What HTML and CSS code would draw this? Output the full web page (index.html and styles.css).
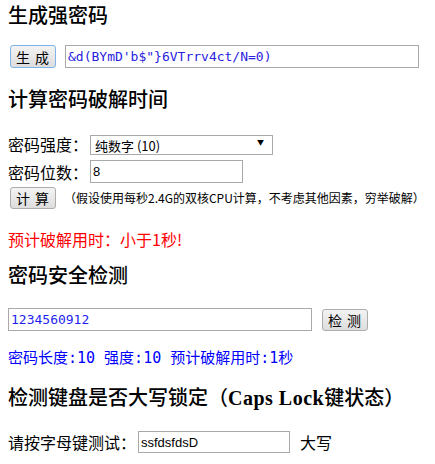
FILE: index.html
```html
<!DOCTYPE html>
<html lang="zh-CN">
<head>
    <meta charset="UTF-8">
    <title>密码工具</title>
    <link rel="stylesheet" href="styles.css">
</head>
<body>
    <div class="page">
        <h3 class="title">生成强密码</h3>
        <div class="row gen-row">
            <button class="btn btn-focus">生 成</button>
            <input class="txt pwd-out" type="text" value="&amp;d(BYmD'b$&quot;}6VTrrv4ct/N=0)">
        </div>

        <h3 class="title crack-title">计算密码破解时间</h3>
        <div class="crack-form">
            <div class="row">
                <span class="label">密码强度：</span>
                <div class="select-wrap">
                    <select class="select">
                        <option>纯数字 (10)</option>
                        <option>小写字母 (26)</option>
                        <option>大小写字母 (52)</option>
                        <option>字母+数字 (62)</option>
                    </select>
                </div>
            </div>
            <div class="row">
                <span class="label">密码位数：</span>
                <input class="txt len-input" type="text" value="8">
            </div>
            <div class="row">
                <button class="btn">计 算</button>
                <span class="note">（假设使用每秒2.4G的双核CPU计算，不考虑其他因素，穷举破解）</span>
            </div>
        </div>
        <div class="crack-result">预计破解用时：小于1秒!</div>

        <h3 class="title check-title">密码安全检测</h3>
        <div class="row check-row">
            <input class="txt check-input" type="text" value="1234560912">
            <button class="btn btn-check">检 测</button>
        </div>
        <div class="check-result">密码长度:10 强度:10 预计破解用时:1秒</div>

        <h3 class="title caps-title">检测键盘是否大写锁定（<span class="en">Caps Lock</span>键状态）</h3>
        <div class="row caps-row">
            <span class="label">请按字母键测试：</span>
            <input class="txt caps-input" type="text" value="ssfdsfdsD">
            <span class="caps-state">大写</span>
        </div>
    </div>
</body>
</html>
```

FILE: styles.css
```css
body {
    margin: 0;
    padding: 0;
    background: #fff;
    color: #000;
    font-family: "Noto Sans CJK SC", sans-serif;
}

.page {
    padding: 4px 8px 0;
}

.title {
    margin: 0;
    font-family: "Liberation Serif", "Noto Sans CJK SC", serif;
    font-size: 20px;
    line-height: 24px;
    font-weight: 500;
}

.title .en {
    font-weight: bold;
    letter-spacing: 0.5px;
}

.row {
    display: flex;
    align-items: center;
}

.label {
    font-size: 16px;
    line-height: 20px;
    width: 82px;
}

.btn {
    margin-left: 2px;
    width: 46px;
    height: 22px;
    padding: 0;
    font-family: "Noto Sans CJK SC", sans-serif;
    font-size: 14px;
    line-height: 18px;
    letter-spacing: 1px;
    color: #000;
    background: linear-gradient(#f3f3f3, #dddddd);
    border: 1px solid #acacac;
    border-radius: 3px;
}

.btn-focus {
    height: 23px;
    border-color: #7eb4ea;
}

.txt {
    box-sizing: border-box;
    margin: 0;
    padding: 0 2px;
    border: 1px solid #a9a9a9;
    font-family: "Liberation Sans", sans-serif;
    font-size: 13px;
    color: #000;
    outline: none;
}

/* 生成强密码 */
.gen-row {
    margin-top: 17px;
}

.pwd-out {
    margin-left: 9px;
    width: 354px;
    height: 23px;
    font-family: "DejaVu Sans Mono", monospace;
    color: #2a22e0;
}

/* 计算密码破解时间 */
.crack-title {
    margin-top: 20px;
}

.crack-form {
    margin-top: 20px;
    display: flex;
    flex-direction: column;
    gap: 4px;
}

.select-wrap {
    position: relative;
}

.select {
    box-sizing: border-box;
    width: 183px;
    height: 20px;
    margin: 0;
    padding: 0 4px;
    appearance: none;
    background: #fff;
    border: 1px solid #a9a9a9;
    border-radius: 0;
    font-family: "Noto Sans CJK SC", sans-serif;
    font-size: 13px;
    color: #000;
}

.select-wrap::after {
    content: "\25BC";
    position: absolute;
    right: 9px;
    top: 5px;
    font-size: 7px;
    line-height: 10px;
    pointer-events: none;
}

.len-input {
    width: 153px;
    height: 23px;
}

.note {
    margin-left: 8px;
    font-size: 12px;
    line-height: 16px;
}

.crack-result {
    margin-top: 20px;
    font-size: 16px;
    line-height: 20px;
    color: #ff0000;
}

/* 密码安全检测 */
.check-title {
    margin-top: 15px;
}

.check-row {
    margin-top: 20px;
}

.check-input {
    width: 304px;
    height: 23px;
    font-family: "DejaVu Sans Mono", monospace;
    color: #1f1ff0;
}

.btn-check {
    margin-left: 10px;
}

.check-result {
    margin-top: 17px;
    font-family: "DejaVu Sans Mono", "Noto Sans CJK SC", monospace;
    font-size: 15px;
    line-height: 21px;
    color: #0000ff;
}

/* 大写锁定 */
.caps-title {
    margin-top: 17px;
}

.caps-row {
    margin-top: 21px;
}

.caps-row .label {
    width: 130px;
}

.caps-input {
    width: 152px;
    height: 22px;
}

.caps-state {
    margin-left: 10px;
    font-size: 16px;
    line-height: 20px;
}
```
